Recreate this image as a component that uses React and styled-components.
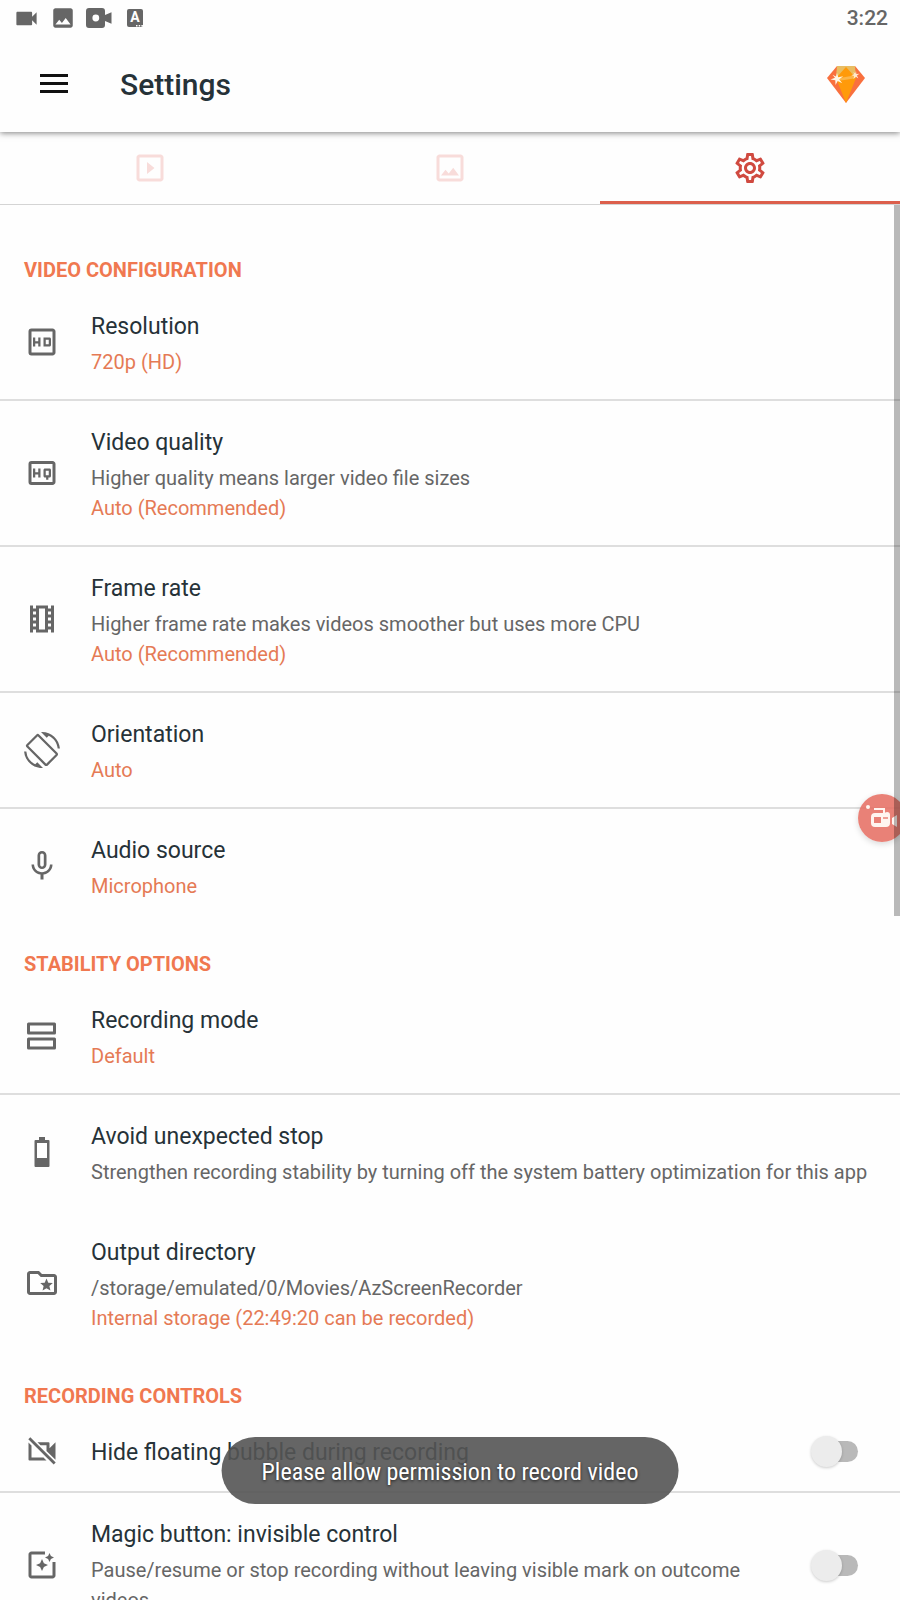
import React from "react";
import styled, { createGlobalStyle } from "styled-components";
import {
  MdImage,
  MdMicNone,
  MdOutlineFolderSpecial,
  MdOutlineHd,
  MdOutlineHighQuality,
  MdOutlineImage,
  MdOutlinePhotoFilter,
  MdOutlineSettings,
  MdOutlineSlideshow,
  MdOutlineTheaters,
  MdScreenRotation,
  MdVideocam,
} from "react-icons/md";

const color = {
  text: "#263238",
  sub: "#666666",
  accent: "#f07850",
  value: "#e57a55",
  active: "#d04a40",
  line: "#dedede",
};

const CamIcon = () => (
  <svg width="26" height="20" viewBox="0 0 26 20" fill="currentColor">
    <path
      fillRule="evenodd"
      d="M3 0h13a3 3 0 0 1 3 3v4l6.500-2.700v11.400L19 13v4a3 3 0 0 1-3 3H3a3 3 0 0 1-3-3V3a3 3 0 0 1 3-3zm6.800 6.600a3.400 3.400 0 1 0 0 6.800 3.400 3.400 0 0 0 0-6.800z"
    />
  </svg>
);

const LetterIcon = () => (
  <LetterBox>
    A
    <svg width="7" height="2" viewBox="0 0 7 2" fill="#fff">
      <path d="M0 0h1.500v1.500H0zM2.700 0h1.500v1.500H2.700zM5.400 0h1.500v1.500H5.400z" />
    </svg>
  </LetterBox>
);

const MenuIcon = () => (
  <svg width="28" height="20" viewBox="0 0 28 20" fill="#111">
    <path d="M0 0h28v3H0zM0 8h28v3H0zM0 16h28v3H0z" />
  </svg>
);

const GemIcon = () => (
  <svg width="38" height="37" viewBox="0 0 38 37">
    <path d="M10 0h18l10 12-19 25L0 12z" fill="#f9703e" />
    <path d="M10 0h18l1 12H9z" fill="#e9bd62" />
    <path d="M19 1l10 11-10 25L9 12z" fill="#ff9a0a" />
    <path d="M10 12.500l14-2.500 5-1-2 3.500-13 2z" fill="#fbb54a" />
    <path
      d="M10 7l1.200 4.300 5-1-4 3 3 4-4.500-2.300L8.500 19l-.2-4.800-4.800-.7 4.500-1.800-2.500-3 3.500 1.800z"
      fill="#fff6e6"
    />
    <path
      d="M29 5l.4 3 3-.2-2.500 1.800 1.500 3-2.600-1.800L26.500 13l.6-3-2.800-.7 2.800-1-.6-2.300 1.800 1.500z"
      fill="#ffe9cf"
    />
  </svg>
);

const AgendaIcon = () => (
  <svg width="36" height="36" viewBox="0 0 36 36" fill="none" stroke="currentColor" strokeWidth="3" strokeLinejoin="round">
    <path d="M4.500 6h26v9h-26zM4.500 21h26v9h-26z" />
  </svg>
);

const BatteryIcon = () => (
  <svg width="36" height="36" viewBox="0 0 36 36" fill="currentColor">
    <path
      fillRule="evenodd"
      d="M15 3h6v3h3.500q1 0 1 1v25q0 1-1 1h-13q-1 0-1-1V7q0-1 1-1H15zM13 9v15h10V9z"
    />
  </svg>
);

const CamOffIcon = () => (
  <svg width="36" height="36" viewBox="0 0 36 36" fill="currentColor">
    <path d="M4.300 6.200l2-2L31.700 29.500l-2 2z" />
    <path d="M4.500 9.500l3 3V24.500h12l3 3H5.500q-1 0-1-1z" />
    <path d="M13.500 9.200h11q1 0 1 1v5l6-6v17.500L22.500 18v-5.800h-6z" />
  </svg>
);

const BubbleIcon = () => (
  <svg width="48" height="48" viewBox="0 0 48 48">
    <circle cx="10" cy="13" r="2" fill="#fff5f0" />
    <path d="M16 15h10v4" stroke="#fff5f0" strokeWidth="2" fill="none" />
    <path
      fillRule="evenodd"
      fill="#fff5f0"
      d="M17 19h9l3-1q3 0 3 3v8q0 4-4 4H17q-4 0-4-4v-6q0-4 4-4zm-1 4v6h7v-6z"
    />
    <path d="M25 24h5" stroke="#e98378" strokeWidth="1.500" />
    <path d="M34 24l5-3v12l-5-3z" fill="#fff5f0" />
  </svg>
);

const sections = [
  {
    title: "Video configuration",
    rows: [
      { icon: <MdOutlineHd />, title: "Resolution", value: "720p (HD)", line: true },
      {
        icon: <MdOutlineHighQuality />,
        title: "Video quality",
        desc: "Higher quality means larger video file sizes",
        value: "Auto (Recommended)",
        line: true,
      },
      {
        icon: <MdOutlineTheaters />,
        title: "Frame rate",
        desc: "Higher frame rate makes videos smoother but uses more CPU",
        value: "Auto (Recommended)",
        line: true,
      },
      { icon: <MdScreenRotation />, title: "Orientation", value: "Auto", line: true },
      { icon: <MdMicNone />, title: "Audio source", value: "Microphone" },
    ],
  },
  {
    title: "Stability options",
    rows: [
      { icon: <AgendaIcon />, title: "Recording mode", value: "Default", line: true },
      {
        icon: <BatteryIcon />,
        title: "Avoid unexpected stop",
        desc: "Strengthen recording stability by turning off the system battery optimization for this app",
      },
      {
        icon: <MdOutlineFolderSpecial />,
        title: "Output directory",
        desc: "/storage/emulated/0/Movies/AzScreenRecorder",
        value: "Internal storage (22:49:20 can be recorded)",
      },
    ],
  },
  {
    title: "Recording controls",
    rows: [
      { icon: <CamOffIcon />, title: "Hide floating bubble during recording", toggle: true, line: true },
      {
        icon: <MdOutlinePhotoFilter />,
        title: "Magic button: invisible control",
        desc: "Pause/resume or stop recording without leaving visible mark on outcome videos.",
        toggle: true,
        line: true,
      },
    ],
  },
];

const SettingRow = ({ icon, title, desc, value, toggle, line }) => (
  <Row as={toggle ? "label" : "button"} $line={line}>
    <RowIcon>{icon}</RowIcon>
    <RowBody>
      <RowTitle>{title}</RowTitle>
      {desc && <RowText>{desc}</RowText>}
      {value && <RowText $accent>{value}</RowText>}
    </RowBody>
    {toggle && <Switch type="checkbox" />}
  </Row>
);

const App = () => {
  return (
    <Screen>
      <GlobalStyle />
      <Header>
        <StatusBar>
          <StatusIcons>
            <MdVideocam size={27} />
            <MdImage size={26} />
            <CamIcon />
            <LetterIcon />
          </StatusIcons>
          <Clock>3:22</Clock>
        </StatusBar>
        <Toolbar>
          <IconButton aria-label="Menu">
            <MenuIcon />
          </IconButton>
          <PageTitle>Settings</PageTitle>
          <IconButton aria-label="Premium">
            <GemIcon />
          </IconButton>
        </Toolbar>
      </Header>
      <Tabs>
        <Tab aria-label="Videos">
          <MdOutlineSlideshow />
        </Tab>
        <Tab aria-label="Images">
          <MdOutlineImage />
        </Tab>
        <Tab aria-label="Settings" $active>
          <MdOutlineSettings />
        </Tab>
      </Tabs>
      <List>
        {sections.map((section) => (
          <section key={section.title}>
            <SectionTitle>{section.title}</SectionTitle>
            {section.rows.map((row) => (
              <SettingRow key={row.title} {...row} />
            ))}
          </section>
        ))}
        <ScrollThumb />
      </List>
      <Bubble aria-label="Open recorder">
        <BubbleIcon />
      </Bubble>
      <Toast role="status">Please allow permission to record video</Toast>
    </Screen>
  );
};

const GlobalStyle = createGlobalStyle`
  * {
    box-sizing: border-box;
  }
  body {
    margin: 0;
    background: #fefefe;
    color: ${color.text};
    font-family: Roboto, "Liberation Sans", sans-serif;
  }
  button {
    border: 0;
    padding: 0;
    background: none;
    color: inherit;
    font: inherit;
    cursor: pointer;
  }
`;

const Screen = styled.div`
  position: relative;
  display: flex;
  flex-direction: column;
  height: 100vh;
  overflow: hidden;
`;

const Header = styled.header`
  flex: none;
  z-index: 1;
  background: #fefefe;
  box-shadow: 0 1px 6px rgba(0, 0, 0, 0.5);
`;

const StatusBar = styled.div`
  display: flex;
  justify-content: space-between;
  align-items: center;
  height: 36px;
  padding: 0 12px 0 13px;
  color: ${color.sub};
`;

const StatusIcons = styled.div`
  display: flex;
  align-items: center;
  gap: 10px;
`;

const LetterBox = styled.span`
  display: flex;
  flex-direction: column;
  align-items: center;
  width: 16px;
  height: 18px;
  margin-left: 5px;
  border-radius: 2px;
  background: ${color.sub};
  color: #fff;
  font-size: 14px;
  font-weight: 700;
  line-height: 16px;

  svg {
    flex: none;
    align-self: flex-end;
  }
`;

const Clock = styled.span`
  font-size: 21px;
  font-weight: 500;
  line-height: 36px;
`;

const Toolbar = styled.div`
  display: flex;
  align-items: center;
  height: 96px;
  padding: 0 35px 0 40px;
`;

const IconButton = styled.button`
  display: flex;
`;

const PageTitle = styled.h1`
  flex: 1;
  margin: 0 0 0 52px;
  font-size: 30px;
  font-weight: 500;
`;

const Tabs = styled.nav`
  flex: none;
  display: flex;
  height: 73px;
  border-bottom: 1px solid #d4d4d4;
`;

const Tab = styled.button`
  flex: 1;
  display: flex;
  justify-content: center;
  align-items: center;

  && {
    border-top: 3px solid transparent;
    border-bottom: 3px solid ${(props) => (props.$active ? "#dc5f4c" : "transparent")};
    color: ${(props) => (props.$active ? color.active : "#f8dcda")};
  }

  svg {
    width: 36px;
    height: 36px;
  }
`;

const List = styled.main`
  position: relative;
  flex: 1;
  min-height: 0;
  padding-top: 24px;
  overflow: hidden;
`;

const SectionTitle = styled.h2`
  margin: 0;
  padding: 26px 24px 0;
  color: ${color.accent};
  font-size: 20px;
  font-weight: 700;
  line-height: 30px;
  text-transform: uppercase;
`;

const Row = styled.button`
  display: flex;
  align-items: center;
  width: 100%;
  min-height: 82px;
  padding: 0 24px;
  text-align: left;

  && {
    border-bottom: 2px solid ${(props) => (props.$line ? color.line : "transparent")};
  }
  &:last-child {
    border-bottom: 0;
  }
`;

const RowIcon = styled.span`
  flex: none;
  display: flex;
  color: ${color.sub};

  svg {
    width: 36px;
    height: 36px;
  }
`;

const RowBody = styled.span`
  flex: 1;
  display: flex;
  flex-direction: column;
  margin-left: 31px;
  padding: 26px 0 22px;
`;

const RowTitle = styled.span`
  font-size: 23px;
  line-height: 32px;

  & + span {
    margin-top: 4px;
  }
`;

const RowText = styled.span`
  color: ${(props) => (props.$accent ? color.value : color.sub)};
  font-size: 20px;
  line-height: 30px;
`;

const Switch = styled.input`
  appearance: none;
  flex: none;
  display: flex;
  align-items: center;
  width: 44px;
  height: 21px;
  margin: 0 18px 0 20px;
  border-radius: 11px;
  background: #b9b9b9;

  &::before {
    content: "";
    width: 31px;
    height: 31px;
    margin-left: -3px;
    border-radius: 50%;
    background: #ececec;
    box-shadow: 0 1px 3px rgba(0, 0, 0, 0.2);
    flex: none;
  }
`;

const ScrollThumb = styled.div`
  position: absolute;
  top: 0;
  right: 0;
  z-index: 3;
  width: 6px;
  height: 51%;
  background: rgba(0, 0, 0, 0.27);
`;

const Bubble = styled.button`
  position: absolute;
  top: 794px;
  right: -6px;
  z-index: 2;
  width: 48px;
  height: 48px;
  border-radius: 50%;
  box-shadow: 0 2px 6px rgba(0, 0, 0, 0.15);

  && {
    background: rgba(230, 112, 100, 0.88);
  }
`;

const Toast = styled.div`
  position: absolute;
  bottom: 96px;
  left: 50%;
  z-index: 4;
  transform: translateX(-50%);
  padding: 19px 40px 16px;
  border-radius: 34px;
  background: rgba(84, 84, 84, 0.9);
  color: #fff;
  font-family: "Roboto Condensed", Roboto, sans-serif;
  font-size: 24px;
  line-height: 32px;
  white-space: nowrap;
  text-shadow: 0 1px 3px rgba(0, 0, 0, 0.7);
`;

export default App;
